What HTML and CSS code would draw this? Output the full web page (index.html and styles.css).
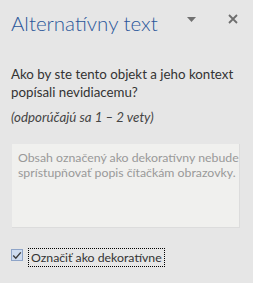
FILE: index.html
```html
<!DOCTYPE html>
<html lang="sk">
<head>
  <meta charset="UTF-8" />
  <meta name="viewport" content="width=device-width, initial-scale=1.0"/>
  <title>Alternatívny text</title>
  <link rel="stylesheet" href="styles.css">
</head>
<body>

  <div class="pane">
    <header class="pane-header">
      <h1>Alternatívny text</h1>
      <div class="pane-tools">
        <button class="tool-btn" aria-label="Možnosti">
          <svg width="9" height="5" viewBox="0 0 9 5"><path d="M0 0h9L4.5 5z" fill="#707070"/></svg>
        </button>
        <button class="tool-btn" aria-label="Zavrieť">
          <svg width="10" height="10" viewBox="0 0 10 10"><path d="M1 1l8 8M9 1l-8 8" stroke="#6e6e6e" stroke-width="1.8"/></svg>
        </button>
      </div>
    </header>

    <section class="pane-body">
      <p class="question">Ako by ste tento objekt a jeho kontext popísali nevidiacemu?</p>
      <p class="hint">(odporúčajú sa 1 – 2 vety)</p>

      <div class="alt-input" role="textbox" aria-disabled="true">
        <span class="placeholder">Obsah označený ako dekoratívny nebude<br>sprístupňovať popis čítačkám obrazovky.</span>
      </div>

      <label class="deco">
        <span class="check">
          <svg width="10" height="9" viewBox="0 0 10 9"><path d="M1.2 4.6l2.6 2.6L8.8 1.4" stroke="#3c3c3c" stroke-width="1.4" fill="none"/></svg>
        </span>
        <span class="deco-text">Označiť ako dekoratívne</span>
      </label>
    </section>
  </div>

</body>
</html>
```

FILE: styles.css
```css
body {
  margin: 0;
  background: #e6e6e6;
  font-family: Lato, "Noto Sans", Arial, sans-serif;
  color: #333;
}

.pane {
  width: 253px;
  height: 283px;
  overflow: hidden;
}

.pane-header {
  display: flex;
  justify-content: space-between;
  align-items: flex-start;
  padding: 8px 15px 0 11px;
}

h1 {
  margin: 0;
  font-weight: 300;
  font-size: 20.5px;
  line-height: 30px;
  color: #2b579a;
}

.pane-tools {
  display: flex;
  gap: 32px;
  padding-top: 6px;
}

.tool-btn {
  border: none;
  background: none;
  padding: 0;
  height: 10px;
  display: flex;
  align-items: center;
}

.pane-body {
  padding: 27px 13px 0 11px;
}

.question {
  margin: 0;
  font-size: 13.3px;
  line-height: 18px;
  color: #333;
}

.hint {
  margin: 7px 0 0;
  font-size: 13.3px;
  line-height: 18px;
  font-style: italic;
  color: #444;
}

.alt-input {
  box-sizing: border-box;
  width: 228px;
  height: 84px;
  margin: 18px 0 0 1px;
  padding: 6px 0 0 6px;
  border-right: 1px solid #dcdcdc;
  border-bottom: 1px solid #dcdcdc;
  background: #f0f0ee;
  font-size: 12.3px;
  line-height: 15px;
  overflow: hidden;
}

.placeholder {
  color: #999;
  white-space: nowrap;
}

.deco {
  display: flex;
  align-items: flex-start;
  gap: 5px;
  margin-top: 20px;
}

.check {
  box-sizing: border-box;
  width: 12px;
  height: 12px;
  margin-top: 1px;
  border: 1px solid #8ea4c8;
  background: #cfdcef;
  display: flex;
  align-items: center;
  justify-content: center;
}

.deco-text {
  border: 1px dotted #000;
  padding: 0 2px;
  font-size: 12.3px;
  line-height: 17px;
  color: #333;
}
```
